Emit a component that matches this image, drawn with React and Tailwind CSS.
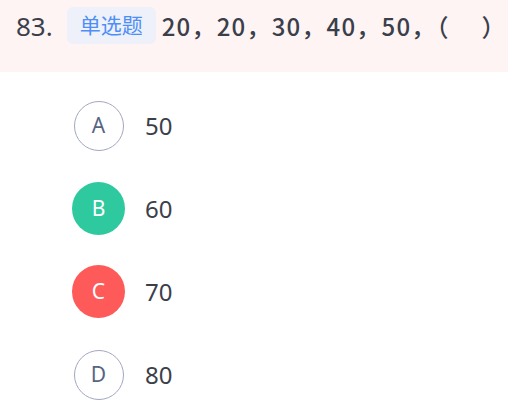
export default function App() {
  const options = [
    { key: "A", text: "50", state: "none" },
    { key: "B", text: "60", state: "right" },
    { key: "C", text: "70", state: "wrong" },
    { key: "D", text: "80", state: "none" },
  ];

  return (
    <div
      className="w-[508px] h-[408px] bg-white overflow-hidden text-[#333]"
      style={{ fontFamily: '"Noto Sans", "Noto Sans CJK SC", sans-serif' }}
    >
      {/* question header */}
      <div className="h-[72px] bg-[#fff4f4] pl-4 pt-[7px]">
        <div className="flex items-center h-[37px]">
          <span className="text-[26px] leading-none text-[#3a3f4a]">83.</span>
          <span className="ml-[14px] h-[37px] px-[13px] flex items-center rounded-md bg-[#eef1f9] text-[#4d8ef8] text-[21px] leading-none">
            单选题
          </span>
          <span
            className="ml-[6px] text-[24px] leading-none font-medium tracking-[1.2px] text-[#3a3f4a] whitespace-pre"
            style={{ fontFamily: '"Noto Sans CJK SC", sans-serif' }}
          >
            20，20，30，40，50，（ 　）
          </span>
        </div>
      </div>

      {/* options */}
      <div className="pt-[12px]">
        {options.map((o) => (
          <div key={o.key} className="h-[83px] flex items-center">
            <div className="ml-[72px] w-[53px] flex justify-center">
              {o.state === "none" ? (
                <div className="w-[50px] h-[50px] rounded-full border border-[#a3a7bf] flex items-center justify-center text-[21px] text-[#566583]">
                  {o.key}
                </div>
              ) : (
                <div
                  className={`w-[53px] h-[53px] rounded-full flex items-center justify-center text-[21px] text-white ${
                    o.state === "right" ? "bg-[#2fc9a0]" : "bg-[#fe5a59]"
                  }`}
                >
                  {o.key}
                </div>
              )}
            </div>
            <span className="ml-5 text-[24px] text-[#3a3f4a]">{o.text}</span>
          </div>
        ))}
      </div>
    </div>
  );
}
